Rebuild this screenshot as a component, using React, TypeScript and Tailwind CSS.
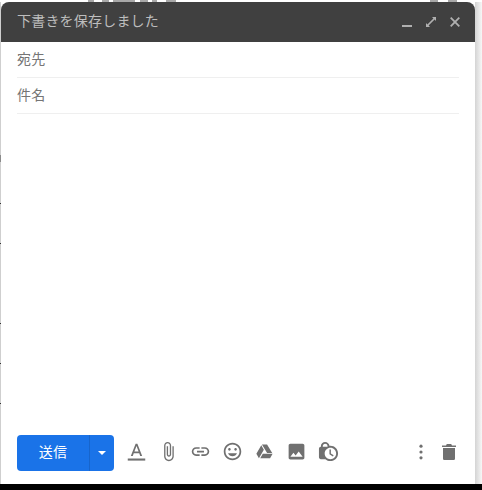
const font = { fontFamily: '"Noto Sans CJK JP", "Liberation Sans", sans-serif' };

// ends of the page text that sticks out above the compose window
const topMarks = [
  { left: 88, w: 6 },
  { left: 102, w: 7 },
  { left: 113, w: 22 },
  { left: 140, w: 8 },
  { left: 152, w: 5 },
  { left: 166, w: 10 },
  { left: 430, w: 8 },
  { left: 448, w: 9 },
];

const marks = [
  { top: 155, h: 7, color: "#8a8a8a" },
  { top: 203, h: 1, color: "#333333" },
  { top: 243, h: 1, color: "#333333" },
  { top: 323, h: 1, color: "#333333" },
  { top: 363, h: 1, color: "#333333" },
  { top: 403, h: 1, color: "#333333" },
];

const tools = [
  {
    name: "format",
    box: "0 0 24 24",
    d: "M11 3L5.5 17h2.25l1.12-3h6.25l1.12 3h2.25L13 3h-2zm-1.38 9L12 5.67 14.38 12H9.62z",
    extra: "M2 20h20v2.4H2z",
  },
  {
    name: "attach",
    box: "0 0 24 24",
    d: "M16.5 6v11.5c0 2.21-1.79 4-4 4s-4-1.79-4-4V5c0-1.38 1.12-2.5 2.5-2.5s2.5 1.12 2.5 2.5v10.5c0 .55-.45 1-1 1s-1-.45-1-1V6H10v9.5c0 1.38 1.12 2.5 2.5 2.5s2.5-1.12 2.5-2.5V5c0-2.21-1.79-4-4-4S7 2.79 7 5v12.5c0 3.04 2.46 5.5 5.5 5.5s5.5-2.46 5.5-5.5V6h-1.5z",
  },
  {
    name: "link",
    box: "0 0 24 24",
    d: "M3.9 12c0-1.71 1.39-3.1 3.1-3.1h4V7H7c-2.76 0-5 2.24-5 5s2.24 5 5 5h4v-1.9H7c-1.71 0-3.1-1.39-3.1-3.1zM8 13h8v-2H8v2zm9-6h-4v1.9h4c1.71 0 3.1 1.39 3.1 3.1s-1.39 3.1-3.1 3.1h-4V17h4c2.76 0 5-2.24 5-5s-2.24-5-5-5z",
  },
  {
    name: "emoji",
    box: "0 0 24 24",
    d: "M11.99 2C6.47 2 2 6.48 2 12s4.47 10 9.99 10C17.52 22 22 17.52 22 12S17.52 2 11.99 2zM12 20c-4.42 0-8-3.58-8-8s3.58-8 8-8 8 3.58 8 8-3.58 8-8 8zm3.5-9c.83 0 1.5-.67 1.5-1.5S16.33 8 15.5 8 14 8.67 14 9.5s.67 1.5 1.5 1.5zm-7 0c.83 0 1.5-.67 1.5-1.5S9.33 8 8.5 8 7 8.67 7 9.5 7.67 11 8.5 11zm3.5 6.5c2.33 0 4.31-1.46 5.11-3.5H6.89c.8 2.04 2.78 3.5 5.11 3.5z",
  },
  {
    name: "drive",
    box: "-2 -2 28 28",
    d: "M7.71 3.5L1.15 15l3.43 5.98L11.14 9.5zM9.73 15l-3.43 6h13.12l3.43-6zM22.28 14L15.42 2.5H8.58L15.44 14z",
  },
  {
    name: "photo",
    box: "0 0 24 24",
    d: "M21 19V5c0-1.1-.9-2-2-2H5c-1.1 0-2 .9-2 2v14c0 1.1.9 2 2 2h14c1.1 0 2-.9 2-2zM8.5 13.5l2.5 3.01L14.5 12l4.5 6H5l3.5-4.5z",
  },
  {
    name: "confidential",
    box: "1 1 22 22",
    d: "M14.5 14.2l2.9 1.7-.8 1.3L13 15v-5h1.5v4.2zM22 14c0 4.41-3.59 8-8 8-2.02 0-3.86-.76-5.27-2H4c-1.15 0-2-.85-2-2V9c0-1.12.89-1.96 2-2v-.5C4 4.01 6.01 2 8.5 2c2.34 0 4.24 1.79 4.46 4.08.34-.05.69-.08 1.04-.08 4.41 0 8 3.59 8 8zM6 7h5v-.74C10.88 4.99 9.8 4 8.5 4 7.12 4 6 5.12 6 6.5V7zm14 7c0-3.31-2.69-6-6-6s-6 2.69-6 6 2.69 6 6 6 6-2.69 6-6z",
  },
];

const Icon = ({ box, d, extra }: { box: string; d: string; extra?: string }) => (
  <svg viewBox={box} className="w-[21px] h-[21px] fill-[#707070]">
    <path d={d} />
    {extra && <path d={extra} />}
  </svg>
);

export default function App() {
  return (
    <div className="relative w-[482px] h-[490px] overflow-hidden bg-white flex flex-col" style={font}>
      {/* page behind the compose window */}
      <div className="relative h-[2px] shrink-0">
        {topMarks.map((m) => (
          <div
            key={m.left}
            className="absolute top-0 h-[2px] bg-[#a8a8a8]"
            style={{ left: m.left, width: m.w }}
          />
        ))}
      </div>

      <div className="flex flex-1 min-h-0">
        <div className="relative w-px bg-[#cfcfcf]">
          {marks.map((m) => (
            <div
              key={m.top}
              className="absolute left-0 w-px"
              style={{ top: m.top - 2, height: m.h, backgroundColor: m.color }}
            />
          ))}
        </div>

        {/* compose window */}
        <div className="w-[474px] flex flex-col bg-white rounded-t-lg">
          <div className="h-[40px] shrink-0 bg-[#404040] rounded-t-lg flex items-center pl-4 pr-[15px]">
            <span className="pb-1 text-sm tracking-[0.2px] text-[#bdbdbd]">下書きを保存しました</span>
            <div className="ml-auto flex items-center gap-[14px]">
              <svg viewBox="0 0 10 10" className="w-[10px] h-[10px] fill-[#b0b0b0]">
                <rect x="0" y="8" width="10" height="2" />
              </svg>
              <svg viewBox="0 0 10 10" className="w-[10px] h-[10px] fill-[#b0b0b0]">
                <path d="M6 0h4v4L8.6 2.6 2.6 8.6 4 10H0V6l1.4 1.4 6-6z" />
              </svg>
              <svg viewBox="0 0 10 10" className="w-[10px] h-[10px] stroke-[#b0b0b0] stroke-[1.8]">
                <path d="M.7.7l8.6 8.6M9.3.7L.7 9.3" />
              </svg>
            </div>
          </div>

          <div className="mx-4 h-9 shrink-0 flex items-center pb-1 border-b border-[#efefef] text-sm tracking-[0.2px] text-[#757575]">
            宛先
          </div>
          <div className="mx-4 h-9 shrink-0 flex items-center pb-1 border-b border-[#efefef] text-sm tracking-[0.2px] text-[#757575]">
            件名
          </div>

          <div className="flex-1" />

          <div className="h-[49px] shrink-0 flex items-start pl-4 pr-3">
            <div className="flex h-9 w-[97px] rounded bg-[#1a73e8] text-white">
              <div className="w-[73px] flex items-center justify-center pb-1 text-sm tracking-[0.2px] border-r border-[#1765cc]">
                送信
              </div>
              <div className="flex-1 flex items-center justify-center">
                <svg viewBox="0 0 8 4" className="w-2 h-1 fill-white">
                  <path d="M0 0h8L4 4z" />
                </svg>
              </div>
            </div>

            <div className="ml-[6px] flex h-[33px] items-center">
              {tools.map((t) => (
                <div key={t.name} className="w-8 flex justify-center">
                  <Icon box={t.box} d={t.d} extra={t.extra} />
                </div>
              ))}
            </div>

            <div className="ml-auto flex h-[34px] items-center">
              <div className="w-7 flex justify-center">
                <svg viewBox="0 0 4 16" className="w-1 h-4 fill-[#707070]">
                  <circle cx="2" cy="2.2" r="1.6" />
                  <circle cx="2" cy="8" r="1.6" />
                  <circle cx="2" cy="13.8" r="1.6" />
                </svg>
              </div>
              <div className="w-7 flex justify-center">
                <svg viewBox="0 0 14 16" className="w-[14px] h-4 fill-[#707070]">
                  <path d="M0 1.4h4L4.8 0h4.4l.8 1.4h4v1.6H0zM1 4h12v10.4c0 .9-.7 1.6-1.6 1.6H2.6C1.7 16 1 15.3 1 14.4z" />
                </svg>
              </div>
            </div>
          </div>
        </div>

        <div className="flex-1 bg-gradient-to-r from-[#d4d4d4] to-[#f7f7f7]" />
      </div>

      <div className="h-[6px] shrink-0 bg-black" />
    </div>
  );
}
